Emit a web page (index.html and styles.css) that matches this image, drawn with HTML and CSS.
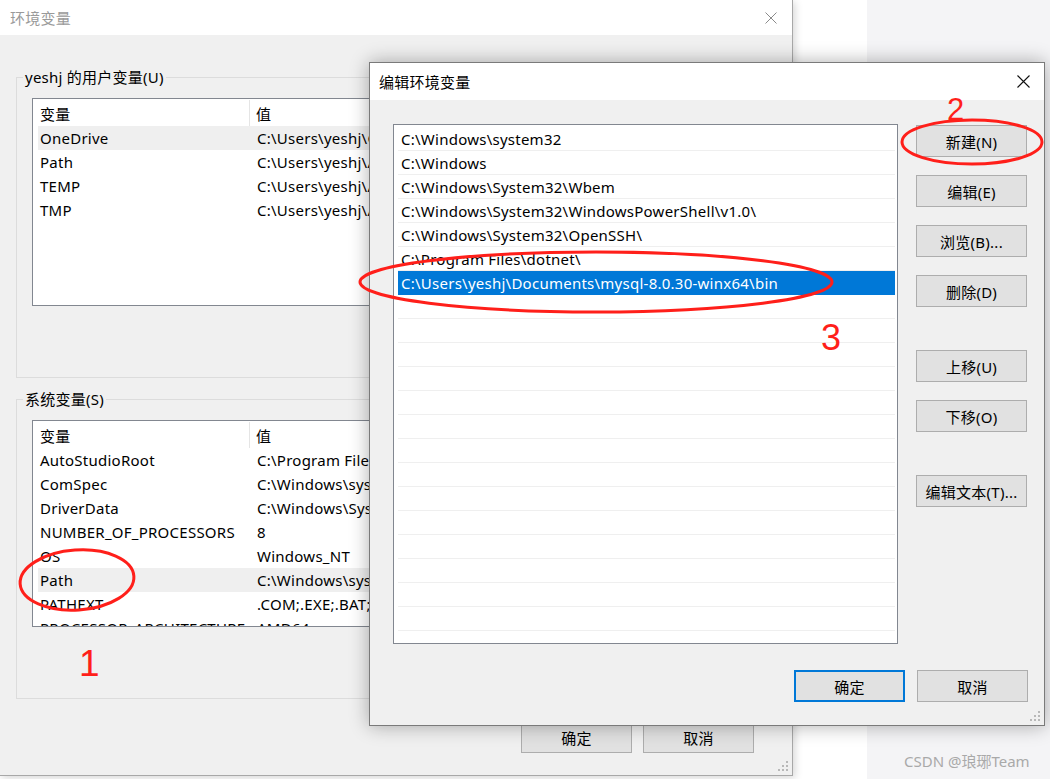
FILE: index.html
```html
<!DOCTYPE html>
<html lang="zh-CN">
<head>
<meta charset="utf-8">
<title>环境变量</title>
<link rel="stylesheet" href="styles.css">
</head>
<body>
<div class="desktop">

  <!-- Left window: 环境变量 -->
  <div class="win win-env">
    <div class="titlebar titlebar-env">
      <span class="title title-inactive">环境变量</span>
      <svg class="close close-inactive" width="12" height="12" viewBox="0 0 12 12"><path d="M0.5 0.5 L11.5 11.5 M11.5 0.5 L0.5 11.5" stroke="#8a8a8a" stroke-width="1" fill="none"/></svg>
    </div>
    <div class="env-body">
      <fieldset class="group">
        <legend>yeshj 的用户变量(U)</legend>
        <div class="listview lv-user">
          <div class="lv-head"><div class="lv-hcell lv-hcell1">变量</div><div class="lv-hcell">值</div></div>
          <div class="lv-row lv-hot"><span>OneDrive</span><span class="val">C:\Users\yeshj\OneDrive</span></div>
          <div class="lv-row"><span>Path</span><span class="val">C:\Users\yeshj\AppData\Local\Microsoft\WindowsApps;</span></div>
          <div class="lv-row"><span>TEMP</span><span class="val">C:\Users\yeshj\AppData\Local\Temp</span></div>
          <div class="lv-row"><span>TMP</span><span class="val">C:\Users\yeshj\AppData\Local\Temp</span></div>
        </div>
      </fieldset>
      <fieldset class="group group-sys">
        <legend>系统变量(S)</legend>
        <div class="listview lv-sys">
          <div class="lv-head"><div class="lv-hcell lv-hcell1">变量</div><div class="lv-hcell">值</div></div>
          <div class="lv-row"><span>AutoStudioRoot</span><span class="val">C:\Program Files\AutoStudio\</span></div>
          <div class="lv-row"><span>ComSpec</span><span class="val">C:\Windows\system32\cmd.exe</span></div>
          <div class="lv-row"><span>DriverData</span><span class="val">C:\Windows\System32\Drivers\DriverData</span></div>
          <div class="lv-row"><span>NUMBER_OF_PROCESSORS</span><span class="val">8</span></div>
          <div class="lv-row"><span>OS</span><span class="val">Windows_NT</span></div>
          <div class="lv-row lv-hot"><span>Path</span><span class="val">C:\Windows\system32;C:\Windows;</span></div>
          <div class="lv-row"><span>PATHEXT</span><span class="val">.COM;.EXE;.BAT;.CMD;.VBS;.VBE;</span></div>
          <div class="lv-row"><span>PROCESSOR_ARCHITECTURE</span><span class="val">AMD64</span></div>
        </div>
      </fieldset>
      <div class="btn-row btn-row-env">
        <button class="btn">确定</button>
        <button class="btn">取消</button>
      </div>
    </div>
    <svg class="grip" width="10" height="10" viewBox="0 0 10 10" fill="#b8b8b8"><rect x="8" y="0" width="2" height="2"/><rect x="4" y="4" width="2" height="2"/><rect x="8" y="4" width="2" height="2"/><rect x="0" y="8" width="2" height="2"/><rect x="4" y="8" width="2" height="2"/><rect x="8" y="8" width="2" height="2"/></svg>
  </div>

  <!-- Right window: 编辑环境变量 -->
  <div class="win win-edit">
    <div class="titlebar titlebar-edit">
      <span class="title">编辑环境变量</span>
      <svg class="close" width="13" height="13" viewBox="0 0 13 13"><path d="M0.5 0.5 L12.5 12.5 M12.5 0.5 L0.5 12.5" stroke="#111" stroke-width="1.1" fill="none"/></svg>
    </div>
    <div class="edit-body">
      <div class="edit-main">
        <div class="pathlist">
          <div class="p-row">C:\Windows\system32</div>
          <div class="p-row">C:\Windows</div>
          <div class="p-row">C:\Windows\System32\Wbem</div>
          <div class="p-row">C:\Windows\System32\WindowsPowerShell\v1.0\</div>
          <div class="p-row">C:\Windows\System32\OpenSSH\</div>
          <div class="p-row">C:\Program Files\dotnet\</div>
          <div class="p-row p-sel">C:\Users\yeshj\Documents\mysql-8.0.30-winx64\bin</div>
          <div class="p-row"></div><div class="p-row"></div><div class="p-row"></div>
          <div class="p-row"></div><div class="p-row"></div><div class="p-row"></div>
          <div class="p-row"></div><div class="p-row"></div><div class="p-row"></div>
          <div class="p-row"></div><div class="p-row"></div><div class="p-row"></div>
          <div class="p-row"></div><div class="p-row"></div><div class="p-row"></div>
        </div>
        <div class="btn-col">
          <button class="btn">新建(N)</button>
          <button class="btn">编辑(E)</button>
          <button class="btn">浏览(B)...</button>
          <button class="btn">删除(D)</button>
          <button class="btn btn-gap">上移(U)</button>
          <button class="btn">下移(O)</button>
          <button class="btn btn-gap">编辑文本(T)...</button>
        </div>
      </div>
      <div class="btn-row btn-row-edit">
        <button class="btn btn-default">确定</button>
        <button class="btn">取消</button>
      </div>
    </div>
    <svg class="grip" width="10" height="10" viewBox="0 0 10 10" fill="#b8b8b8"><rect x="8" y="0" width="2" height="2"/><rect x="4" y="4" width="2" height="2"/><rect x="8" y="4" width="2" height="2"/><rect x="0" y="8" width="2" height="2"/><rect x="4" y="8" width="2" height="2"/><rect x="8" y="8" width="2" height="2"/></svg>
  </div>

  <!-- Red annotations -->
  <svg class="marks" width="1050" height="779" viewBox="0 0 1050 779">
    <g fill="none" stroke="#ff1f1a" stroke-width="3">
      <ellipse cx="77" cy="580" rx="57" ry="30" transform="rotate(-4 77 580)"/>
      <ellipse cx="972" cy="142" rx="70" ry="22"/>
      <ellipse cx="596" cy="282" rx="236" ry="30"/>
    </g>
  </svg>
  <span class="num num1">1</span>
  <span class="num num2">2</span>
  <span class="num num3">3</span>

  <span class="watermark">CSDN @琅琊Team</span>
</div>
</body>
</html>
```

FILE: styles.css
```css
* { box-sizing: border-box; }

html, body {
  margin: 0;
  padding: 0;
}

body {
  width: 1050px;
  height: 779px;
  overflow: hidden;
  font-family: "Noto Sans", "Noto Sans CJK SC", sans-serif;
  font-size: 15px;
  letter-spacing: 0.25px;
  color: #000;
}

.desktop {
  position: relative;
  width: 1050px;
  height: 779px;
  overflow: hidden;
  background: linear-gradient(to right, #ffffff 867px, #f4f4f6 867px);
}

/* ---------- windows ---------- */
.win {
  position: absolute;
  display: flex;
  flex-direction: column;
  background: #f0f0f0;
}

.win-env {
  left: 0;
  top: 0;
  width: 793px;
  height: 776px;
  border-right: 1px solid #a8a8a8;
  border-bottom: 1px solid #a8a8a8;
  box-shadow: 2px 2px 8px rgba(0, 0, 0, 0.16);
}

.win-edit {
  left: 369px;
  top: 62px;
  width: 676px;
  height: 664px;
  border: 1px solid #7a7a7a;
  box-shadow: 0 0 18px rgba(0, 0, 0, 0.32);
}

.titlebar {
  flex-shrink: 0;
  display: flex;
  align-items: center;
  justify-content: space-between;
  background: #fff;
}

.titlebar-env {
  height: 35px;
  padding: 0 15px 0 10px;
}

.titlebar-edit {
  height: 37px;
  padding: 0 14px 0 9px;
}

.title { line-height: 20px; }
.title-inactive { color: #9a9a9a; }

.close { display: block; }

.grip {
  position: absolute;
  right: 4px;
  bottom: 4px;
}

/* ---------- left window body ---------- */
.env-body {
  flex: 1;
  display: flex;
  flex-direction: column;
  padding: 32px 16px 0 16px;
}

.group {
  margin: 0;
  width: 760px;
  border: 1px solid #dcdcdc;
  padding: 11px 15px 71px 15px;
  min-width: 0;
}

.group legend {
  padding: 0 2px;
  margin-left: -9px;
  line-height: 20px;
}

.group-sys { margin-top: 11px; }

.listview {
  background: #fff;
  border: 1px solid #828790;
  padding: 1px 0 0 5px;
  overflow: hidden;
}

.lv-user { height: 208px; }
.lv-sys { height: 207px; }

.lv-head {
  display: grid;
  grid-template-columns: 212px 1fr;
  height: 26px;
}

.lv-hcell {
  display: flex;
  align-items: center;
  padding-left: 6px;
  white-space: nowrap;
}

.lv-hcell1 {
  padding-left: 2px;
  border-right: 1px solid #e5e5e5;
}

.lv-row {
  display: grid;
  grid-template-columns: 213px 1fr;
  height: 24px;
  align-items: center;
  white-space: nowrap;
  overflow: hidden;
}

.lv-row span { padding-left: 2px; overflow: hidden; }
.lv-row .val { padding-left: 6px; }

.lv-hot { background: #efefef; }

.btn-row {
  display: flex;
  justify-content: flex-end;
  gap: 11px;
}

.btn-row-env {
  margin-top: 22px;
  padding-right: 22px;
}

/* ---------- buttons ---------- */
.btn {
  width: 111px;
  height: 32px;
  margin: 0;
  padding: 0;
  background: #e1e1e1;
  border: 1px solid #adadad;
  border-radius: 0;
  font-family: "Noto Sans", "Noto Sans CJK SC", sans-serif;
  font-size: 15px;
  letter-spacing: 0.25px;
  color: #000;
}

.btn-default { border: 2px solid #0078d7; }

/* ---------- right window body ---------- */
.edit-body {
  flex: 1;
  display: flex;
  flex-direction: column;
  padding: 24px 16px 0 23px;
}

.edit-main {
  display: flex;
  align-items: flex-start;
}

.pathlist {
  width: 505px;
  height: 520px;
  background: #fff;
  border: 1px solid #828790;
  padding: 2px 2px 0 4px;
  overflow: hidden;
  flex-shrink: 0;
}

.p-row {
  height: 24px;
  line-height: 25px;
  padding-left: 3px;
  border-bottom: 1px solid #efefef;
  white-space: nowrap;
}

.p-sel {
  background: #0078d7;
  color: #fff;
  border-bottom-color: #0078d7;
}

.btn-col {
  display: flex;
  flex-direction: column;
  gap: 18px;
  margin-left: 18px;
  padding-top: 1px;
}

.btn-col .btn-gap { margin-top: 25px; }

.btn-row-edit {
  margin-top: 26px;
  gap: 12px;
}

/* ---------- annotations ---------- */
.marks {
  position: absolute;
  left: 0;
  top: 0;
  pointer-events: none;
}

.num {
  position: absolute;
  font-family: "Liberation Sans", Arial, sans-serif;
  letter-spacing: 0;
  line-height: 1;
  color: #ff1f1a;
}

.num1 { left: 79px; top: 645px; font-size: 37px; }
.num2 { left: 947px; top: 94px; font-size: 31px; }
.num3 { left: 821px; top: 320px; font-size: 36px; }

.watermark {
  position: absolute;
  left: 904px;
  top: 751px;
  font-family: "Noto Sans", "Noto Sans CJK SC", sans-serif;
  font-size: 15px;
  letter-spacing: 0;
  line-height: 20px;
  color: #a9a9a9;
}
```
